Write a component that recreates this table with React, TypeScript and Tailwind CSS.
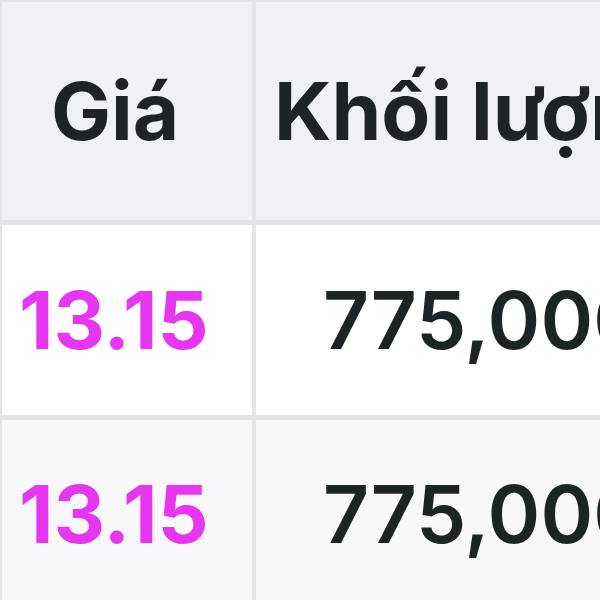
export default function App() {
  const font = { fontFamily: 'Inter, "Noto Sans", sans-serif' };
  return (
    <div className="w-[600px] h-[600px] overflow-hidden bg-white" style={font}>
      <div className="flex flex-col w-[900px] border-t-2 border-l-2 border-[#e3e4e7]">
        <div className="flex h-[223px] bg-[#f0f1f4] border-b-[5px] border-[#e3e4e7]">
          <div className="w-[254px] flex-none border-r-4 border-[#e3e4e7] flex items-center pl-[49px] text-[80px] font-bold text-[#1e2326] leading-none">
            Giá
          </div>
          <div className="flex-1 flex items-center pl-[18px] text-[80px] font-bold text-[#1e2326] leading-none whitespace-nowrap">
            Khối lượng
          </div>
        </div>
        <div className="flex h-[195px] bg-white border-b-[5px] border-[#e3e4e7]">
          <div className="w-[254px] flex-none border-r-4 border-[#e3e4e7] flex items-center pl-[17px] text-[80px] font-bold text-[#e636f2] leading-none">
            13.15
          </div>
          <div className="flex-1 flex items-center pl-[67px] text-[80px] font-semibold text-[#1e2326] leading-none">
            775,000
          </div>
        </div>
        <div className="flex h-[188px] bg-[#f8f8fa]">
          <div className="w-[254px] flex-none border-r-4 border-[#e3e4e7] flex items-center pl-[17px] text-[80px] font-bold text-[#e636f2] leading-none">
            13.15
          </div>
          <div className="flex-1 flex items-center pl-[67px] text-[80px] font-semibold text-[#1e2326] leading-none">
            775,000
          </div>
        </div>
      </div>
    </div>
  );
}
